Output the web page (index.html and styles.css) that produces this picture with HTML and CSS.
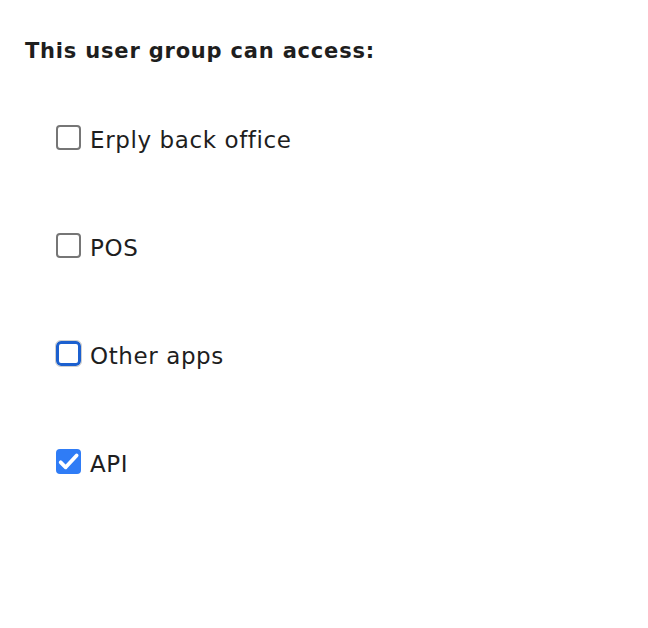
FILE: index.html
```html
<!DOCTYPE html>
<html>
<head>
<meta charset="utf-8">
<link rel="stylesheet" href="styles.css">
</head>
<body>
<div class="panel">
  <h2 class="title">This user group can access:</h2>
  <ul class="options">
    <li class="option"><span class="box"></span><span class="label">Erply back office</span></li>
    <li class="option"><span class="box"></span><span class="label">POS</span></li>
    <li class="option"><span class="box focus"></span><span class="label">Other apps</span></li>
    <li class="option"><span class="box checked"><svg viewBox="0 0 24 24" width="25" height="25"><path d="M4.5 12.8l4.8 4.8L19.8 6.2" fill="none" stroke="#fff" stroke-width="3.6" stroke-linecap="round" stroke-linejoin="round"/></svg></span><span class="label">API</span></li>
  </ul>
</div>
</body>
</html>
```
FILE: styles.css
```css
html, body {
  margin: 0;
  padding: 0;
  background: #fff;
}
body {
  font-family: "DejaVu Sans", "Open Sans", sans-serif;
  color: #222;
}
.panel {
  padding: 36px 25px 0;
}
.title {
  margin: 0;
  font-size: 21px;
  font-weight: 700;
  letter-spacing: 0.8px;
  line-height: 30px;
  color: #1e1e1e;
}
.options {
  list-style: none;
  margin: 0;
  padding: 0 0 0 56px;
  margin-left: -25px;
  margin-top: 59px;
  display: flex;
  flex-direction: column;
  gap: 78px;
}
.option {
  display: flex;
  align-items: center;
  gap: 9px;
  height: 30px;
}
.box {
  box-sizing: border-box;
  width: 25px;
  height: 25px;
  border: 2px solid #767676;
  border-radius: 4px;
  background: #fff;
  display: flex;
  align-items: center;
  justify-content: center;
  position: relative;
  top: -3px;
}
.box.focus {
  border: 3.5px solid #1c60cf;
  border-radius: 5px;
  outline: 1px solid #cfcfcf;
  outline-offset: 0;
  box-shadow: 0 0 0 1px #e6e6e6;
}
.box.checked {
  border: none;
  background: #2f7cf6;
}
.label {
  font-size: 23px;
  letter-spacing: 0.6px;
  line-height: 30px;
  color: #1e1e1e;
}
```
